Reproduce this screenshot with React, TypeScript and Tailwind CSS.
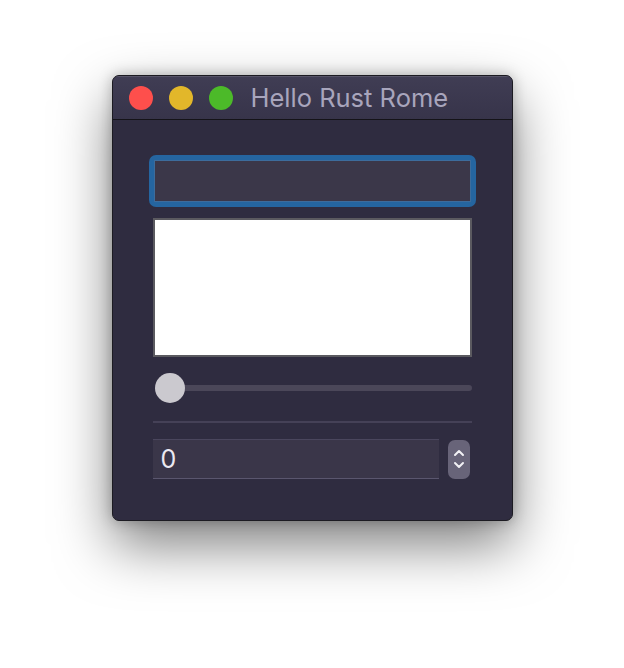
export default function App() {
  return (
    <div className="min-h-[668px] w-full bg-white pt-[75px]">
      <div className="mx-auto flex w-[401px] flex-col overflow-hidden rounded-[7px] border border-[#1c1b22] bg-[#2f2c40] shadow-[0_24px_55px_rgba(0,0,0,0.5),0_0_14px_rgba(0,0,0,0.25)]">
        {/* Title bar */}
        <div className="flex h-[44px] items-center border-b border-[#141318] bg-gradient-to-b from-[#403d54] to-[#37344a] pl-[16px] shadow-[inset_0_1px_0_rgba(255,255,255,0.12)]">
          <div className="flex items-center gap-[16px]">
            <span className="h-[24px] w-[24px] rounded-full bg-[#fe4f4c]" />
            <span className="h-[24px] w-[24px] rounded-full bg-[#e2b72a]" />
            <span className="h-[24px] w-[24px] rounded-full bg-[#4cba29]" />
          </div>
          <span className="ml-[18px] font-['Inter',sans-serif] text-[25.5px] leading-none text-[#a8a5bc]">
            Hello Rust Rome
          </span>
        </div>

        {/* Body */}
        <div className="flex flex-col px-[40px] pb-[41px] pt-[35px]">
          {/* Focused text field */}
          <div className="-mx-[4px] rounded-[7px] bg-[#2565a0] p-[5px]">
            <div className="h-[42px] border border-[#3d6c9c] bg-[#3b3749]" />
          </div>

          {/* White area */}
          <div className="mt-[11px] h-[139px] border-2 border-[#5b5a60] bg-white" />

          {/* Slider */}
          <div className="relative mt-[16px] flex h-[30px] items-center">
            <div className="ml-[8px] h-[6px] flex-1 rounded-full bg-[#4b4759]" />
            <div className="absolute left-[2px] top-0 h-[30px] w-[30px] rounded-full bg-[#cbc9cf]" />
          </div>

          {/* Separator */}
          <div className="mt-[18px] h-[2px] bg-[#454157]" />

          {/* Number field */}
          <div className="mt-[16px] flex items-center">
            <div className="flex h-[40px] w-[286px] items-center border-t border-b border-[#4a465d] border-b-[#5a566e] bg-[#3a3649] pl-[8px]">
              <span className="font-['Inter',sans-serif] text-[25px] leading-none text-[#ebe9f1]">0</span>
            </div>
            <div className="ml-[9px] flex h-[39px] w-[22px] flex-col items-center justify-center gap-[4px] rounded-[7px] bg-[#686479]">
              <svg width="12" height="8" viewBox="0 0 12 8" fill="none">
                <path d="M2 6 L6 2 L10 6" stroke="#f2f1f5" strokeWidth="2" strokeLinecap="round" strokeLinejoin="round" />
              </svg>
              <svg width="12" height="8" viewBox="0 0 12 8" fill="none">
                <path d="M2 2 L6 6 L10 2" stroke="#f2f1f5" strokeWidth="2" strokeLinecap="round" strokeLinejoin="round" />
              </svg>
            </div>
          </div>
        </div>
      </div>
    </div>
  );
}
